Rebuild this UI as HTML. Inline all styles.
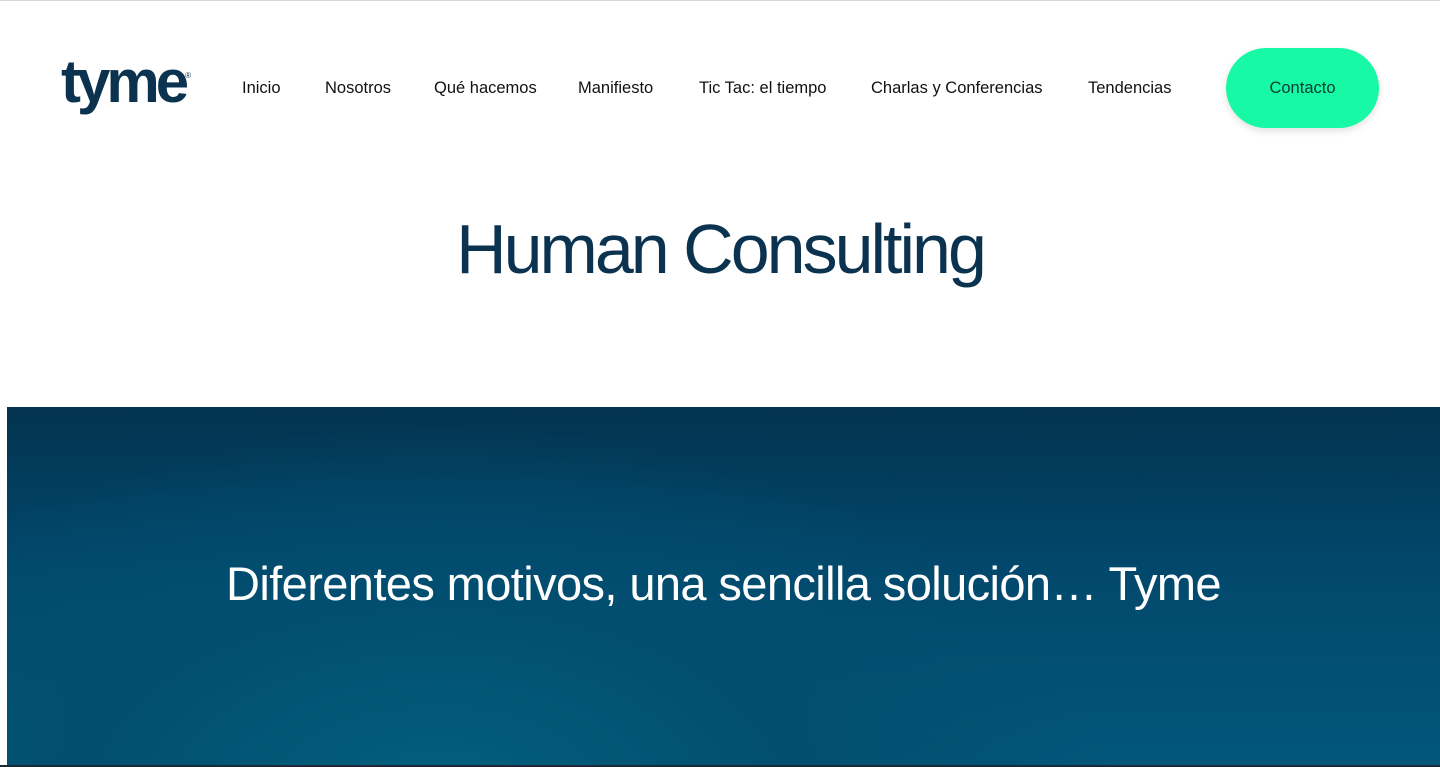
<!DOCTYPE html>
<html><head><meta charset="utf-8"><style>
html,body{margin:0;padding:0;width:1440px;height:767px;overflow:hidden;background:#fff;font-family:"Liberation Sans",sans-serif}
.top{position:absolute;left:0;top:0;width:1440px;height:1px;background:#d8d8d8}
.logo{position:absolute;left:61px;top:52px;font-weight:bold;font-size:60px;color:#0b3350;letter-spacing:-4px;line-height:1}
.logo sup{font-size:8px;letter-spacing:0;position:absolute;right:-6px;top:20px;font-weight:normal}
.nav a{position:absolute;top:79px;font-size:16.5px;color:#111;text-decoration:none;white-space:nowrap}
.btn{position:absolute;left:1226px;top:48px;width:153px;height:80px;border-radius:40px;background:#17f9a5;color:#0b3a34;font-size:16.5px;text-align:center;line-height:80px;box-shadow:0 3px 8px rgba(0,0,0,.12)}
h1{position:absolute;left:0;width:1440px;top:209px;margin:0;text-align:center;font-weight:normal;font-size:70px;letter-spacing:-3px;color:#0b3350}
.band{position:absolute;left:7px;top:407px;width:1433px;height:358px;background:radial-gradient(ellipse 900px 500px at 30% 110%,#02607e 0%,#024e70 40%,rgba(2,70,104,0) 75%),linear-gradient(180deg,#03334f 0%,#02486c 45%,#02577a 100%)}
.band p{position:absolute;left:0;width:100%;top:149px;margin:0;text-align:center;color:#fff;font-size:47px;letter-spacing:-0.6px}
.bot{position:absolute;left:0;top:765px;width:1440px;height:2px;background:#1a2a33}
</style></head><body>
<div class="top"></div>
<div class="logo">tyme<sup>®</sup></div>
<div class="nav">
<a style="left:242px">Inicio</a>
<a style="left:325px">Nosotros</a>
<a style="left:434px">Qué hacemos</a>
<a style="left:578px">Manifiesto</a>
<a style="left:699px">Tic Tac: el tiempo</a>
<a style="left:871px">Charlas y Conferencias</a>
<a style="left:1088px">Tendencias</a>
</div>
<div class="btn">Contacto</div>
<h1>Human Consulting</h1>
<div class="band"><p>Diferentes motivos, una sencilla solución… Tyme</p></div>
<div class="bot"></div>
</body></html>
